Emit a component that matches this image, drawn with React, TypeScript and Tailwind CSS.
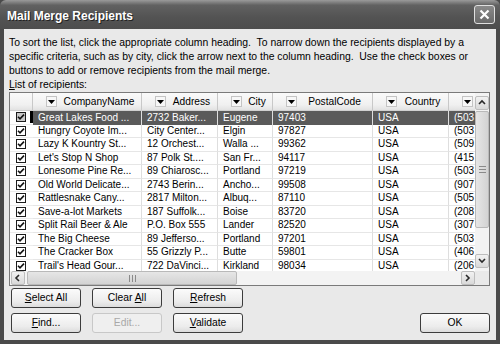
import React from "react";

const rows: string[][] = [
  ["Great Lakes Food ...", "2732 Baker...", "Eugene", "97403", "USA", "(503"],
  ["Hungry Coyote Im...", "City Center...", "Elgin", "97827", "USA", "(503"],
  ["Lazy K Kountry St...", "12 Orchest...", "Walla ...", "99362", "USA", "(509"],
  ["Let's Stop N Shop", "87 Polk St....", "San Fr...", "94117", "USA", "(415"],
  ["Lonesome Pine Re...", "89 Chiarosc...", "Portland", "97219", "USA", "(503"],
  ["Old World Delicate...", "2743 Berin...", "Ancho...", "99508", "USA", "(907"],
  ["Rattlesnake Cany...", "2817 Milton...", "Albuq...", "87110", "USA", "(505"],
  ["Save-a-lot Markets", "187 Suffolk...", "Boise", "83720", "USA", "(208"],
  ["Split Rail Beer & Ale", "P.O. Box 555", "Lander", "82520", "USA", "(307"],
  ["The Big Cheese", "89 Jefferso...", "Portland", "97201", "USA", "(503"],
  ["The Cracker Box", "55 Grizzly P...", "Butte", "59801", "USA", "(406"],
  ["Trail's Head Gour...", "722 DaVinci...", "Kirkland", "98034", "USA", "(206"],
];

const cols = [
  { title: "CompanyName", w: "w-[109px]" },
  { title: "Address", w: "w-[76px]" },
  { title: "City", w: "w-[55px]" },
  { title: "PostalCode", w: "w-[100px]" },
  { title: "Country", w: "w-[76px]" },
  { title: "", w: "w-[26px]" },
];

function Arrow() {
  return (
    <div className="w-[11px] h-[11px] shrink-0 bg-[#f7f7f7] border border-[#c4c4c4] flex items-center justify-center">
      <svg width="7" height="4" viewBox="0 0 7 4">
        <path d="M0 0H7L3.5 4Z" fill="#000" />
      </svg>
    </div>
  );
}

function Check({ grey }: { grey?: boolean }) {
  return (
    <div
      className={`w-[10px] h-[10px] border border-[#1c1c1c] flex items-center justify-center ${
        grey ? "bg-[#c9c9c9]" : "bg-white"
      }`}
    >
      <svg width="8" height="8" viewBox="0 0 8 8">
        <path d="M1 3.8L3 5.8L7 1.6" stroke="#111" strokeWidth="1.6" fill="none" />
      </svg>
    </div>
  );
}

function Btn({ u, rest, pre, disabled }: { u: string; rest: string; pre?: string; disabled?: boolean }) {
  return (
    <div
      className={`w-[70px] h-[20px] shrink-0 rounded-[3px] border flex items-center justify-center text-[10.3px] ${
        disabled
          ? "border-[#c8c8c8] text-[#a8a8a8] bg-[#efefef]"
          : "border-[#3c3c3c] text-black bg-[linear-gradient(to_bottom,#fbfbfb,#ececec_70%,#dcdcdc)]"
      }`}
    >
      <span className="whitespace-pre">
        {pre}
        {u ? <span className={disabled ? "" : "underline underline-offset-1"}>{u}</span> : null}
        {rest}
      </span>
    </div>
  );
}

function ScrollBtn({ dir }: { dir: "up" | "down" | "left" | "right" }) {
  const paths: Record<string, string> = {
    up: "M1 5L4 2L7 5",
    down: "M1 2L4 5L7 2",
    left: "M5 1L2 4L5 7",
    right: "M2 1L5 4L2 7",
  };
  return (
    <div className="w-[14px] h-[14px] shrink-0 rounded-[2px] border border-[#bdbdbd] bg-[linear-gradient(to_bottom,#f2f2f2,#d9d9d9)] flex items-center justify-center">
      <svg width="8" height="8" viewBox="0 0 8 8">
        <path d={paths[dir]} stroke="#2a2a2a" strokeWidth="1.6" fill="none" />
      </svg>
    </div>
  );
}

export default function App() {
  return (
    <div
      className="w-[500px] h-[344px] bg-[#4a4a4a] flex flex-col overflow-hidden"
      style={{ fontFamily: '"Liberation Sans", Arial, sans-serif' }}
    >
      {/* Title bar */}
      <div className="h-[29px] shrink-0 rounded-t-[6px] bg-[linear-gradient(to_bottom,#9a9a9a,#616161_18%,#535353_60%,#4d4d4d)] flex items-center pl-[7px] pr-[5px] pt-[3px]">
        <div className="text-white font-bold text-[12px] [text-shadow:1px_1px_0_#222] grow">
          Mail Merge Recipients
        </div>
        <div className="w-[21px] h-[19px] rounded-[3px] border border-[#e0e0e0] bg-[linear-gradient(to_bottom,#8a8a8a,#6a6a6a)] flex items-center justify-center -mt-[3px]">
          <svg width="11" height="11" viewBox="0 0 11 11">
            <path d="M1.5 1.5L9.5 9.5M9.5 1.5L1.5 9.5" stroke="#fff" strokeWidth="2.2" />
          </svg>
        </div>
      </div>

      {/* Body */}
      <div className="mx-[4px] mb-[4px] grow bg-[#e9e9e9] flex flex-col pt-[7px] pl-[5px] pr-[6px]">
        <div className="text-[10.4px] leading-[14px] text-black">
          To sort the list, click the appropriate column heading.&nbsp; To narrow down the recipients displayed by a
          <br />
          specific criteria, such as by city, click the arrow next to the column heading.&nbsp; Use the check boxes or
          <br />
          buttons to add or remove recipients from the mail merge.
        </div>
        <div className="text-[10.4px] leading-[14px] text-black">
          <span className="underline underline-offset-1">L</span>ist of recipients:
        </div>

        {/* List box */}
        <div className="w-[481px] h-[194px] border border-[#7a7a7a] bg-white flex flex-col text-[10px] text-black">
          <div className="flex h-[178px]">
            <div className="w-[465px] flex flex-col overflow-hidden">
              {/* header */}
              <div className="h-[18px] shrink-0 flex bg-[linear-gradient(to_bottom,#fafafa,#f0f0f0_70%,#e2e2e2)] border-b border-[#d0d0d0]">
                <div className="w-[23px] shrink-0 border-r border-[#c8c8c8]" />
                {cols.map((c, i) => (
                  <div
                    key={i}
                    className={`${c.w} shrink-0 flex items-center pl-[13px] overflow-hidden ${
                      i < 5 ? "border-r border-[#c8c8c8]" : ""
                    }`}
                  >
                    <Arrow />
                    <div className="grow text-center whitespace-nowrap text-[10.2px]">{c.title}</div>
                  </div>
                ))}
              </div>
              {/* rows */}
              {rows.map((r, ri) => {
                const sel = ri === 0;
                return (
                  <div key={ri} className="h-[13.5px] shrink-0 flex">
                    <div className="w-[23px] shrink-0 flex items-center pl-[6px] border-b border-[#ececec]">
                      <Check grey={sel} />
                      {sel ? <div className="ml-[4px] w-[3px] h-[12px] bg-black" /> : null}
                    </div>
                    {r.map((cell, ci) => (
                      <div
                        key={ci}
                        className={`${cols[ci].w} shrink-0 flex items-center pl-[5px] whitespace-nowrap overflow-hidden leading-none ${
                          sel ? "bg-[#5a5a5a] text-white" : "border-b border-[#e6e6e6]"
                        } ${ci < 5 ? "border-r border-r-[#dedede]" : ""}`}
                      >
                        {cell}
                      </div>
                    ))}
                  </div>
                );
              })}
            </div>
            {/* vertical scrollbar */}
            <div className="w-[14px] shrink-0 bg-[#f3f3f3] flex flex-col">
              <div className="h-[17px] flex items-end">
                <ScrollBtn dir="up" />
              </div>
              <div className="mt-[1px] h-[117px] rounded-[2px] border border-[#b9b9b9] bg-[linear-gradient(to_right,#e6e6e6,#d3d3d3)] flex flex-col items-center justify-center gap-[2px]">
                <div className="w-[7px] h-px bg-[#8a8a8a]" />
                <div className="w-[7px] h-px bg-[#8a8a8a]" />
                <div className="w-[7px] h-px bg-[#8a8a8a]" />
              </div>
              <div className="grow" />
              <div className="h-[17px] flex items-start">
                <ScrollBtn dir="down" />
              </div>
            </div>
          </div>
          {/* horizontal scrollbar */}
          <div className="h-[14px] flex bg-[#f3f3f3]">
            <div className="ml-[1px]">
              <ScrollBtn dir="left" />
            </div>
            <div className="ml-[2px] w-[210px] h-[14px] rounded-[2px] border border-[#b9b9b9] bg-[linear-gradient(to_bottom,#e6e6e6,#d3d3d3)] flex items-center justify-center gap-[2px]">
              <div className="w-px h-[7px] bg-[#8a8a8a]" />
              <div className="w-px h-[7px] bg-[#8a8a8a]" />
              <div className="w-px h-[7px] bg-[#8a8a8a]" />
            </div>
            <div className="grow" />
            <ScrollBtn dir="right" />
            <div className="w-[14px] bg-[#e9e9e9]" />
          </div>
        </div>

        {/* Buttons */}
        <div className="mt-[2px] pl-[2px] flex flex-col gap-[5px]">
          <div className="flex gap-[11px]">
            <Btn u="S" rest="elect All" />
            <Btn pre="Clear " u="A" rest="ll" />
            <Btn u="R" rest="efresh" />
          </div>
          <div className="flex gap-[11px]">
            <Btn u="F" rest="ind..." />
            <Btn u="E" rest="dit..." disabled />
            <Btn u="V" rest="alidate" />
            <div className="grow" />
            <Btn u="" rest="OK" />
          </div>
        </div>
      </div>
    </div>
  );
}
